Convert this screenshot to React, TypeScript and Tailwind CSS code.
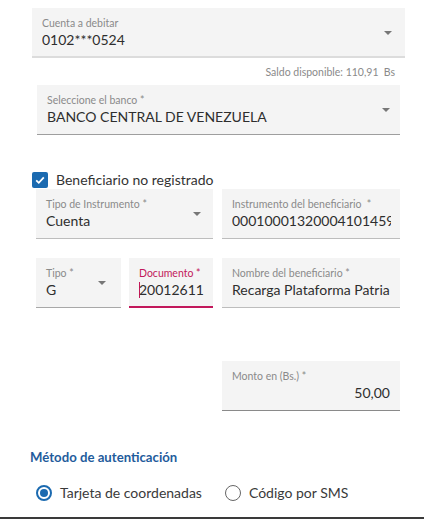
import React from "react";

function Arrow({ cls }: { cls: string }) {
  return (
    <svg className={`absolute ${cls}`} width="8" height="4" viewBox="0 0 8 4">
      <path d="M0 0 L8 0 L4 4 Z" fill="#777" />
    </svg>
  );
}

function Field({
  label,
  value,
  wrap,
  border = "border-b border-[#a8a8a8]",
  labelCls = "text-[#8a8a8a]",
  valueCls = "",
  arrow,
  children,
}: {
  label: string;
  value?: string;
  wrap: string;
  border?: string;
  labelCls?: string;
  valueCls?: string;
  arrow?: string;
  children?: React.ReactNode;
}) {
  return (
    <div className={`relative h-[50px] bg-[#f4f4f4] pl-[10px] pr-[9px] pt-[9px] overflow-hidden ${border} ${wrap}`}>
      <div className={`text-[10.5px] leading-[12px] whitespace-nowrap ${labelCls}`}>{label}</div>
      {children ?? (
        <div className={`mt-[2px] text-[14px] leading-[18px] text-[#2e2e2e] whitespace-nowrap overflow-hidden ${valueCls}`}>
          {value}
        </div>
      )}
      {arrow && <Arrow cls={arrow} />}
    </div>
  );
}

export default function App() {
  return (
    <div className="w-[424px] h-[519px] bg-white overflow-hidden flex flex-col font-['Lato',sans-serif] relative">
      <Field
        label="Cuenta a debitar"
        value="0102***0524"
        wrap="mt-[8px] ml-[32px] w-[373px]"
        border="border-b-2 border-[#dcdcdc]"
        arrow="right-[13px] top-[23px]"
      />
      <div className="mt-[8px] w-[395px] text-right text-[10.5px] leading-[12px] text-[#8a8a8a] whitespace-pre">
        Saldo disponible: 110,91  Bs
      </div>
      <Field
        label="Seleccione el banco *"
        value="BANCO CENTRAL DE VENEZUELA"
        wrap="mt-[7px] ml-[37px] w-[363px]"
        border="border-b border-[#9e9e9e]"
        arrow="right-[10px] top-[23px]"
      />
      <div className="mt-[36px] ml-[32px] flex items-center gap-[8px] h-[18px]">
        <div className="w-[16px] h-[16px] rounded-[2px] bg-[#1b6ab0] flex items-center justify-center">
          <svg width="12" height="12" viewBox="0 0 12 12">
            <path d="M2.2 6.3 L4.8 8.8 L9.8 3.4" stroke="white" strokeWidth="1.8" fill="none" />
          </svg>
        </div>
        <span className="text-[14px] leading-[18px] text-[#333]">Beneficiario no registrado</span>
      </div>
      <div className="ml-[36px] flex gap-[9px]">
        <Field
          label="Tipo de Instrumento *"
          value="Cuenta"
          wrap="w-[177px]"
          border="border-b border-[#bdbdbd]"
          arrow="right-[12px] top-[23px]"
        />
        <Field
          label="Instrumento del beneficiario  *"
          value="0001000132000410145990"
          wrap="w-[178px]"
          border="border-b border-[#bdbdbd]"
          labelCls="text-[#8a8a8a] whitespace-pre"
          valueCls="w-[159px]"
        />
      </div>
      <div className="mt-[19px] ml-[36px] flex">
        <Field
          label="Tipo *"
          value="G"
          wrap="w-[85px]"
          border="border-b border-[#a8a8a8]"
          arrow="right-[15px] top-[23px]"
        />
        <Field
          label="Documento *"
          wrap="ml-[8px] w-[84px]"
          border="border-b-2 border-[#c2185b]"
          labelCls="text-[#c2185b]"
        >
          <div className="mt-[2px] flex items-center text-[14px] leading-[18px] text-[#2e2e2e] whitespace-nowrap">
            <span className="w-[1px] h-[16px] bg-[#c2185b] -mr-[1px]" />
            20012611
          </div>
        </Field>
        <Field
          label="Nombre del beneficiario *"
          value="Recarga Plataforma Patria"
          wrap="ml-[9px] w-[178px]"
          border="border-b border-[#bdbdbd]"
        />
      </div>
      <Field
        label="Monto en (Bs.) *"
        value="50,00"
        wrap="mt-[53px] ml-[222px] w-[178px]"
        border="border-b border-[#8a8a8a]"
        valueCls="text-right pr-[1px]"
      />
      <div className="mt-[37px] ml-[30px] text-[13.2px] leading-[18px] font-bold text-[#1f5c9c]">
        Método de autenticación
      </div>
      <div className="mt-[18px] flex items-center h-[18px]">
        <div className="ml-[36px] w-[16px] h-[16px] rounded-full border-2 border-[#1b6ab0] flex items-center justify-center">
          <div className="w-[8px] h-[8px] rounded-full bg-[#1b6ab0]" />
        </div>
        <span className="ml-[8px] text-[14px] leading-[18px] text-[#3a3a3a]">Tarjeta de coordenadas</span>
        <div className="ml-[23px] w-[16px] h-[16px] rounded-full border border-[#666]" />
        <span className="ml-[8px] text-[14px] leading-[18px] text-[#3a3a3a]">Código por SMS</span>
      </div>
      <div className="absolute left-0 right-0 bottom-0 h-[2px] bg-[#3a3a3a]" />
    </div>
  );
}
